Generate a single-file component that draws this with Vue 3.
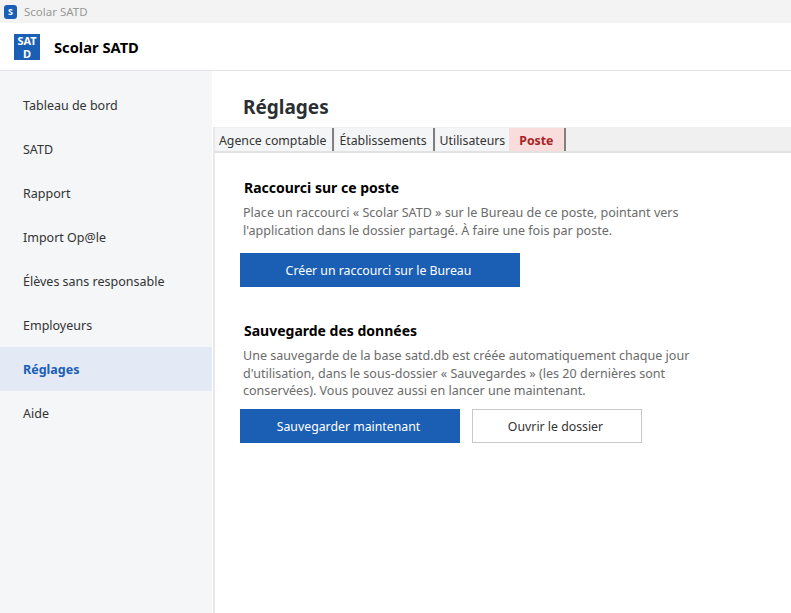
<script setup>
const navItems = ['Tableau de bord', 'SATD', 'Rapport', 'Import Op@le', 'Élèves sans responsable', 'Employeurs', 'Réglages', 'Aide'];
const tabs = ['Agence comptable', 'Établissements', 'Utilisateurs', 'Poste'];
</script>

<template>
  <div class="window">
    <div class="titlebar">
      <span class="titlebar__icon">S</span>
      <span class="titlebar__text">Scolar SATD</span>
    </div>
    <header class="header">
      <div class="logo">SATD</div>
      <div class="header__name">Scolar SATD</div>
    </header>
    <div class="body">
      <nav class="nav">
        <div
          v-for="item in navItems"
          :key="item"
          :class="item === 'Réglages' ? 'nav__item nav__item--active' : 'nav__item'">{{ item }}</div>
      </nav>
      <main class="main">
        <h1 class="main__title">Réglages</h1>
        <div class="settings">
          <div class="tabs">
            <div
              v-for="tab in tabs"
              :key="tab"
              :class="tab === 'Poste' ? 'tab tab--active' : 'tab'">{{ tab }}</div>
          </div>
          <div class="panel">
            <section class="block">
              <h2 class="block__title">Raccourci sur ce poste</h2>
              <p class="block__text">Place un raccourci « Scolar SATD » sur le Bureau de ce poste, pointant vers<br>l'application dans le dossier partagé. À faire une fois par poste.</p>
              <div class="actions">
                <button class="btn btn--primary btn--wide">Créer un raccourci sur le Bureau</button>
              </div>
            </section>
            <section class="block">
              <h2 class="block__title">Sauvegarde des données</h2>
              <p class="block__text">Une sauvegarde de la base satd.db est créée automatiquement chaque jour<br>d'utilisation, dans le sous-dossier « Sauvegardes » (les 20 dernières sont<br>conservées). Vous pouvez aussi en lancer une maintenant.</p>
              <div class="actions actions--tight">
                <button class="btn btn--primary btn--save">Sauvegarder maintenant</button>
                <button class="btn btn--plain">Ouvrir le dossier</button>
              </div>
            </section>
          </div>
        </div>
      </main>
    </div>
  </div>
</template>

<style>
  html, body {
    margin: 0;
    background: #fff;
  }
</style>

<style scoped>
  .window {
    display: flex;
    flex-direction: column;
    height: 613px;
    overflow: hidden;
    font-family: "Noto Sans", "Open Sans", sans-serif;
    font-size: 12.5px;
    color: #333;
  }

  .titlebar {
    display: flex;
    align-items: center;
    flex: 0 0 23px;
    padding-left: 4px;
    background: #f3f3f3;
  }

  .titlebar__icon {
    width: 13px;
    height: 14px;
    margin-right: 7px;
    border-radius: 3px;
    background: #1b5fb4;
    color: #fff;
    font-size: 9px;
    font-weight: 700;
    line-height: 14px;
    text-align: center;
  }

  .titlebar__text {
    color: #999;
    font-size: 11.5px;
  }

  .header {
    display: flex;
    align-items: center;
    flex: 0 0 47px;
    padding-left: 14px;
    background: #fff;
    border-bottom: 1px solid #e1e3e6;
  }

  .logo {
    width: 26px;
    height: 26px;
    margin-right: 14px;
    background: #1b5fb4;
    color: #fff;
    font-size: 11px;
    font-weight: 700;
    line-height: 13px;
    text-align: center;
    word-break: break-all;
  }

  .header__name {
    color: #000;
    font-size: 14.7px;
    font-weight: 700;
  }

  .body {
    display: flex;
    flex: 1;
    min-height: 0;
  }

  .nav {
    flex: 0 0 212px;
    padding-top: 12px;
    background: #f4f6f8;
  }

  .nav__item {
    height: 44px;
    padding-left: 23px;
    line-height: 46px;
  }

  .nav__item--active {
    background: #e3eaf6;
    color: #1b5fb4;
    font-weight: 700;
  }

  .main {
    display: flex;
    flex-direction: column;
    flex: 1;
    min-width: 0;
    margin-left: 1px;
  }

  .main__title {
    margin: 0;
    padding: 18px 0 2px 30px;
    color: #2b2f33;
    font-size: 19px;
    font-weight: 700;
    line-height: 36px;
  }

  .settings {
    flex: 1;
    border-left: 2px solid #e8e8e8;
  }

  .tabs {
    display: flex;
    box-sizing: border-box;
    height: 26px;
    padding-top: 1px;
    background: #f0f0f0;
    border-bottom: 2px solid #e2e2e2;
  }

  .tab {
    margin-right: 1px;
    padding: 0 6px 0 4px;
    line-height: 26px;
    font-size: 12.3px;
    background: #f4f5f6;
    border-right: 2px solid #808080;
  }

  .tab:nth-child(3) {
    margin-right: 0;
    border-right: 0;
    padding-right: 4px;
  }

  .tab--active {
    padding: 0 11px 0 10px;
    background: #f9dcdc;
    color: #a82424;
    font-weight: 700;
  }

  .panel {
    padding: 25px 0 0 25px;
  }

  .block {
    margin-bottom: 34px;
  }

  .block__title {
    margin: 0 0 6px 4px;
    color: #000;
    font-size: 14px;
    font-weight: 700;
    line-height: 20px;
  }

  .block__text {
    margin: 0 0 0 3px;
    color: #6b6b6b;
    font-size: 12.55px;
    line-height: 17.5px;
  }

  .actions {
    display: flex;
    gap: 12px;
    margin-top: 14px;
  }

  .actions--tight {
    margin-top: 9.5px;
  }

  .btn {
    height: 34px;
    padding: 0 3px 0 0;
    font-family: inherit;
    font-size: 12.3px;
    cursor: pointer;
  }

  .btn--primary {
    background: #1b5fb4;
    color: #fff;
    border: 0;
  }

  .btn--wide {
    width: 280px;
  }

  .btn--save {
    width: 220px;
  }

  .btn--plain {
    width: 170px;
    background: #fff;
    color: #333;
    border: 1px solid #c8c8c8;
  }
</style>
